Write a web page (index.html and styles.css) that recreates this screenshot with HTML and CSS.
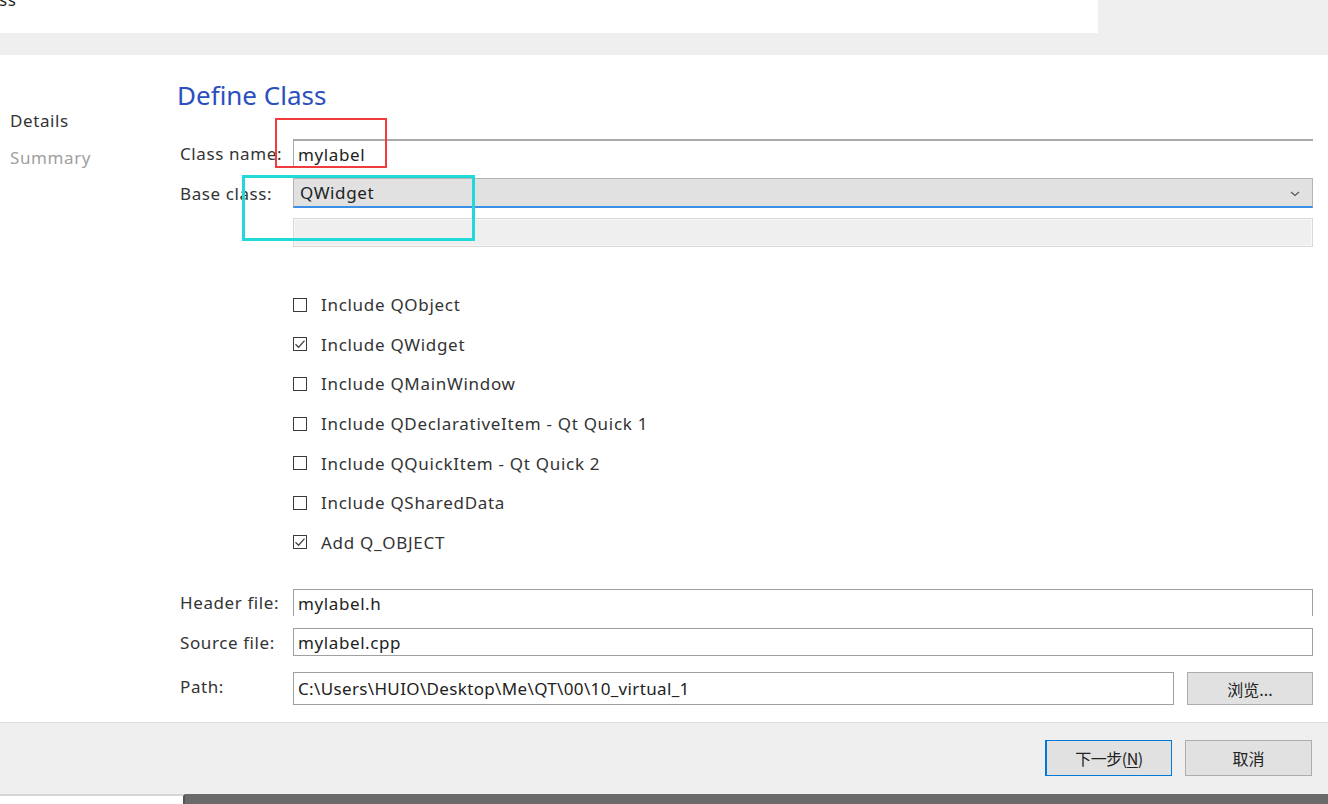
FILE: index.html
```html
<!DOCTYPE html>
<html lang="en">
<head>
<meta charset="utf-8">
<title>Define Class</title>
<link rel="stylesheet" href="styles.css">
</head>
<body>
<div class="top">
  <div class="titlebox"><span class="ttl">ss</span></div>
  <div class="topfill"></div>
</div>
<div class="band"></div>
<div class="main">
  <aside class="side">
    <div class="step active">Details</div>
    <div class="step">Summary</div>
  </aside>
  <section class="content">
    <h1 class="heading">Define Class</h1>
    <div class="row r-name">
      <span class="lbl">Class name:</span>
      <div class="edit edit-open">mylabel</div>
    </div>
    <div class="row r-base">
      <span class="lbl">Base class:</span>
      <div class="combo"><span>QWidget</span>
        <svg class="chev" width="10" height="6" viewBox="0 0 10 6"><path d="M1 1 L5 4.5 L9 1" fill="none" stroke="#555" stroke-width="1.2"/></svg>
      </div>
    </div>
    <div class="row r-dis">
      <span class="lbl"></span>
      <div class="disabled"></div>
    </div>
    <div class="checks">
      <div class="chk"><span class="box"></span>Include QObject</div>
      <div class="chk"><span class="box on"><svg width="12" height="12" viewBox="0 0 12 12"><path d="M1.5 6.2 L4.6 9.2 L10.5 2.6" fill="none" stroke="#444" stroke-width="1.3"/></svg></span>Include QWidget</div>
      <div class="chk"><span class="box"></span>Include QMainWindow</div>
      <div class="chk"><span class="box"></span>Include QDeclarativeItem - Qt Quick 1</div>
      <div class="chk"><span class="box"></span>Include QQuickItem - Qt Quick 2</div>
      <div class="chk"><span class="box"></span>Include QSharedData</div>
      <div class="chk"><span class="box on"><svg width="12" height="12" viewBox="0 0 12 12"><path d="M1.5 6.2 L4.6 9.2 L10.5 2.6" fill="none" stroke="#444" stroke-width="1.3"/></svg></span>Add Q_OBJECT</div>
    </div>
    <div class="row r-header">
      <span class="lbl">Header file:</span>
      <div class="edit edit-hdr">mylabel.h</div>
    </div>
    <div class="row r-source">
      <span class="lbl">Source file:</span>
      <div class="edit edit-full">mylabel.cpp</div>
    </div>
    <div class="row r-path">
      <span class="lbl lbl-path">Path:</span>
      <div class="pathline">
        <div class="edit edit-full edit-path">C:\Users\HUIO\Desktop\Me\QT\00\10_virtual_1</div>
        <div class="btn btn-browse">浏览...</div>
      </div>
    </div>
    <div class="mark mark-red"></div>
    <div class="mark mark-cyan"></div>
  </section>
</div>
<footer class="foot">
  <div class="btn btn-next">下一步(<u>N</u>)</div>
  <div class="btn btn-cancel">取消</div>
</footer>
<div class="taskbar">
  <div class="tb-left"></div>
  <div class="tb-right"></div>
</div>
</body>
</html>
```
FILE: styles.css
```css
* { box-sizing: border-box; }
html, body { margin: 0; padding: 0; }
body {
  width: 1328px;
  height: 804px;
  overflow: hidden;
  background: #efefef;
  font-family: "Noto Sans", "Noto Sans CJK SC", sans-serif;
  font-size: 17px;
  letter-spacing: 0.6px;
  color: #333;
}
.top { display: flex; height: 33px; }
.titlebox {
  width: 1098px;
  background: #fff;
  overflow: hidden;
}
.ttl {
  display: block;
  margin-top: -10px;
  margin-left: -1px;
  font-size: 17px;
  line-height: 20px;
  color: #222;
}
.topfill { flex: 1; background: #efefef; }
.band { height: 22px; background: #efefef; }

.main {
  display: flex;
  height: 667px;
  background: #fff;
}
.side {
  width: 177px;
  padding: 56px 0 0 10px;
}
.step {
  line-height: 20px;
  height: 20px;
  margin-bottom: 17px;
  color: #a0a0a0;
}
.step.active { color: #333; }

.content {
  position: relative;
  flex: 1;
  padding: 24px 15px 0 0;
}
.heading {
  margin: 0 0 28px 0;
  font-weight: normal;
  font-size: 26px;
  letter-spacing: 0;
  line-height: 32px;
  height: 32px;
  color: #2b4fbf;
}
.row {
  display: grid;
  grid-template-columns: 116px 1fr;
  align-items: center;
}
.lbl { padding-left: 3px; color: #333; white-space: nowrap; }
.r-name { height: 28px; }
.r-base { height: 30px; margin-top: 11px; }
.r-dis { height: 29px; margin-top: 10px; }
.edit {
  height: 100%;
  padding-left: 4px;
  display: flex;
  align-items: center;
  color: #222;
  background: #fff;
}
.edit-open { border-top: 2px solid #a8a8a8; border-left: 1px solid #a8a8a8; }
.edit-hdr { border-top: 1px solid #a0a0a0; border-left: 1px solid #a0a0a0; border-right: 1px solid #a0a0a0; }
.edit-full { border: 1px solid #a0a0a0; }
.combo {
  height: 30px;
  display: flex;
  align-items: center;
  justify-content: space-between;
  padding: 0 12px 0 6px;
  background: #e1e1e1;
  border: 1px solid #b4b4b4;
  border-bottom: 2px solid #3b8fe5;
  color: #222;
}
.chev { margin-top: 2px; }
.disabled {
  height: 29px;
  background: #efefef;
  border: 1px solid #d9d9d9;
  box-shadow: inset 0 0 0 1px #f8f8f8;
}
.checks {
  margin: 38px 0 0 116px;
  height: 277px;
}
.chk {
  height: 39.6px;
  display: flex;
  align-items: center;
  color: #333;
  letter-spacing: 0.7px;
}
.box {
  width: 14px;
  height: 14px;
  border: 1px solid #3a3a3a;
  margin-right: 14px;
  display: flex;
  align-items: center;
  justify-content: center;
  background: #fff;
}
.r-header { height: 27px; margin-top: 27px; }
.r-source { height: 28px; margin-top: 12px; }
.r-path { height: 33px; margin-top: 16px; }
.lbl-path { align-self: start; padding-top: 3px; }
.pathline { display: flex; height: 33px; gap: 13px; }
.edit-path { flex: 1; letter-spacing: 0.35px; }
.btn {
  display: flex;
  align-items: center;
  justify-content: center;
  background: #e1e1e1;
  border: 1px solid #adadad;
  color: #222;
  font-family: "Noto Sans CJK SC", sans-serif;
  font-size: 16px;
  letter-spacing: 0;
}
.btn-browse { width: 126px; }

.mark { position: absolute; pointer-events: none; }
.mark-red {
  left: 98px; top: 63px; width: 112px; height: 50px;
  border: 2.5px solid #f23c3c;
}
.mark-cyan {
  left: 65px; top: 120px; width: 233px; height: 66px;
  border: 3px solid #22d9d9;
}

.foot {
  height: 72px;
  border-top: 1px solid #dfdfdf;
  background: #efefef;
  display: flex;
  justify-content: flex-end;
  gap: 13px;
  padding: 17px 16px 0 0;
}
.foot .btn { width: 127px; height: 36px; }
.btn-next {
  border: 1px solid #0078d7;
  border-left-width: 2px;
  letter-spacing: -0.5px;
}
.btn-next u { text-underline-offset: 2px; }
.taskbar { display: flex; height: 10px; }
.tb-left {
  width: 185px;
  background: #fff;
  border-top: 2px solid #d6d6d6;
  border-right: 2px solid #555;
}
.tb-right { flex: 1; background: #6a6a6a; }
```
